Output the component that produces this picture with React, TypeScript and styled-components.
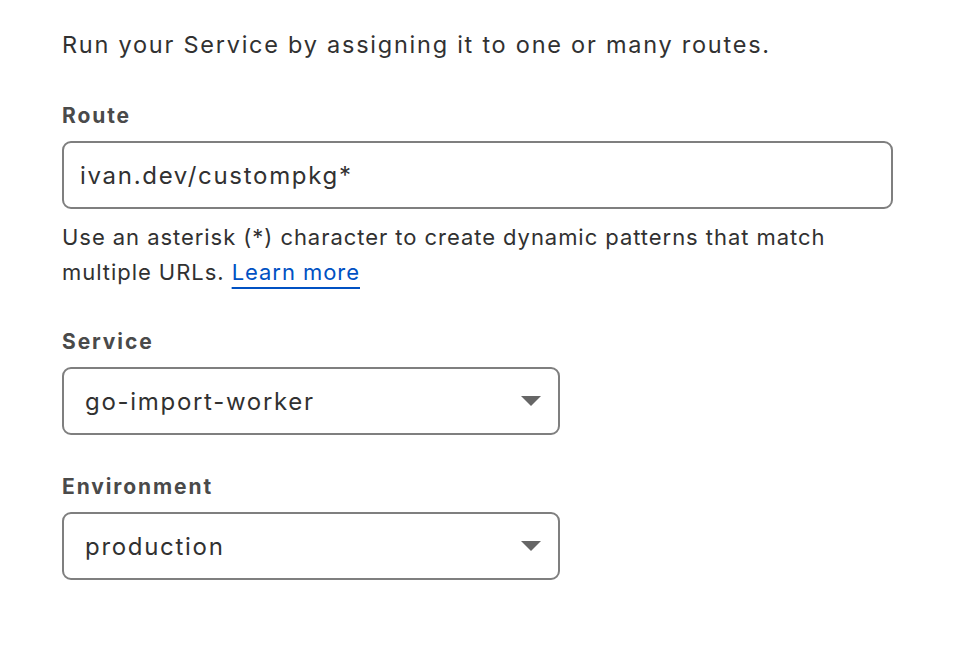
import React from "react";
import styled, { createGlobalStyle } from "styled-components";

const Global = createGlobalStyle`
  html, body { margin: 0; padding: 0; background: #ffffff; }
  body { font-family: Inter, "Noto Sans", "Liberation Sans", sans-serif; -webkit-font-smoothing: antialiased; }
`;

const Page = styled.div`
  display: flex;
  flex-direction: column;
  padding: 29px 62px 0 62px;
  width: 832px;
`;

const Intro = styled.p`
  margin: 0 0 41px 0;
  font-size: 23.5px;
  line-height: 32px;
  letter-spacing: 1.75px;
  color: #313131;
`;

const Field = styled.div`
  display: flex;
  flex-direction: column;
  margin-bottom: 38px;
`;

const Label = styled.label`
  font-size: 21px;
  line-height: 28px;
  font-weight: 700;
  letter-spacing: 1.9px;
  color: #4a4a4a;
  margin-bottom: 11px;
`;

const Box = styled.div<{ $width: number }>`
  box-sizing: border-box;
  width: ${(p) => p.$width}px;
  height: 68px;
  border: 2px solid #7f7f7f;
  border-radius: 9px;
  display: flex;
  align-items: center;
  justify-content: space-between;
  padding: 0 17px 0 ${(p) => (p.$width > 600 ? 16 : 21)}px;
  font-size: 24px;
  letter-spacing: 1.7px;
  color: #313131;
`;

const Caret = styled.svg`
  width: 20px;
  height: 10px;
  flex: none;
`;

const Help = styled.p`
  margin: 11px 0 0 0;
  font-size: 22px;
  line-height: 35px;
  letter-spacing: 0.95px;
  color: #313131;
  max-width: 790px;
`;

const Link = styled.a`
  color: #0051c3;
  text-decoration: underline;
  text-decoration-thickness: 2px;
  text-underline-offset: 7px;
`;

const Select: React.FC<{ value: string }> = ({ value }) => (
  <Box $width={498}>
    <span>{value}</span>
    <Caret viewBox="0 0 20 10">
      <polygon points="0,0 20,0 10,10" fill="#666666" />
    </Caret>
  </Box>
);

export default function App() {
  return (
    <>
      <Global />
      <Page>
        <Intro>Run your Service by assigning it to one or many routes.</Intro>
        <Field>
          <Label>Route</Label>
          <Box $width={831}>
            <span>ivan.dev/custompkg*</span>
          </Box>
          <Help>
            Use an asterisk (*) character to create dynamic patterns that match multiple URLs.{" "}
            <Link href="#">Learn more</Link>
          </Help>
        </Field>
        <Field>
          <Label>Service</Label>
          <Select value="go-import-worker" />
        </Field>
        <Field>
          <Label>Environment</Label>
          <Select value="production" />
        </Field>
      </Page>
    </>
  );
}
